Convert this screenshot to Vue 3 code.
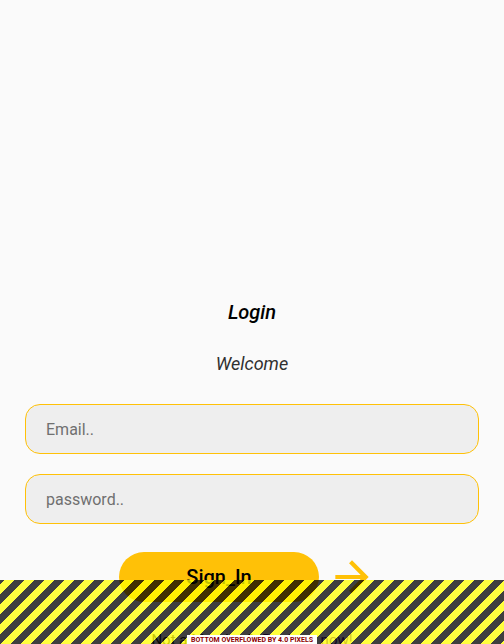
<script setup>
import { ref } from 'vue'

const email = ref('')
const password = ref('')
</script>

<template>
  <main class="screen">
    <form class="login" @submit.prevent>
      <h1 class="title">Login</h1>
      <p class="subtitle">Welcome</p>
      <input v-model="email" class="field" type="email" placeholder="Email.." aria-label="Email" />
      <input v-model="password" class="field" type="password" placeholder="password.." aria-label="Password" />
      <div class="actions">
        <button class="submit" type="submit">Sign_In</button>
        <svg class="arrow" viewBox="0 0 24 24" aria-hidden="true">
          <path d="M12 4l-1.41 1.41L16.17 11H4v2h12.17l-5.58 5.59L12 20l8-8z" />
        </svg>
      </div>
      <p class="register">
        <span>Not a Member?</span>
        <a href="#">Register now!</a>
      </p>
    </form>
    <div class="overflow">
      <span class="message">BOTTOM OVERFLOWED BY 4.0 PIXELS</span>
    </div>
  </main>
</template>

<style>
body {
  background: #fafafa;
}
</style>

<style scoped>
.screen {
  position: relative;
  display: flex;
  flex-direction: column;
  justify-content: flex-end;
  height: 100vh;
  overflow: hidden;
  background: #fafafa;
  font-family: Roboto, sans-serif;
}

.login {
  display: flex;
  flex-direction: column;
  flex-shrink: 0;
  gap: 20px;
  padding: 0 25px;
  margin-bottom: -6px;
}

.title,
.subtitle {
  margin: 0 0 8px;
  text-align: center;
  font-style: italic;
  line-height: 24px;
}

.title {
  font-size: 20px;
  font-weight: 500;
  color: #000;
}

.subtitle {
  font-size: 18px;
  font-weight: 400;
  color: #303030;
}

.field {
  box-sizing: border-box;
  width: 100%;
  height: 50px;
  padding: 0 20px;
  border: 1px solid #ffc107;
  border-radius: 15px;
  outline: none;
  background: #eee;
  font-family: inherit;
  font-size: 16px;
  color: #212121;
}

.field::placeholder {
  color: #707070;
  opacity: 1;
}

.actions {
  display: flex;
  align-items: center;
  justify-content: center;
  gap: 8px;
  padding-right: 8px;
  margin-top: 8px;
}

.submit {
  width: 200px;
  height: 50px;
  padding: 0;
  border: 0;
  border-radius: 25px;
  background: #ffc107;
  font-family: inherit;
  font-size: 20px;
  font-weight: 500;
  color: #000;
}

.arrow {
  width: 50px;
  height: 50px;
  fill: #ffc107;
}

.register {
  display: flex;
  justify-content: center;
  gap: 8px;
  margin: 8px 0 0;
  font-size: 15px;
  line-height: 20px;
  color: #212121;
}

.register a {
  color: #4a148c;
  text-decoration: none;
}

.overflow {
  position: absolute;
  right: 0;
  bottom: 0;
  left: 0;
  display: flex;
  align-items: flex-end;
  justify-content: center;
  height: 10vh;
  background: linear-gradient(
    135deg,
    rgba(0, 0, 0, 0.75) 12.5%,
    rgba(255, 255, 0, 0.75) 12.5% 37.5%,
    rgba(0, 0, 0, 0.75) 37.5% 62.5%,
    rgba(255, 255, 0, 0.75) 62.5% 87.5%,
    rgba(0, 0, 0, 0.75) 87.5%
  ) 0 0 / 20px 20px;
}

.message {
  padding: 1px 4px 0;
  background: #fff;
  font-size: 7px;
  line-height: 8px;
  font-weight: 700;
  color: #900000;
}
</style>
